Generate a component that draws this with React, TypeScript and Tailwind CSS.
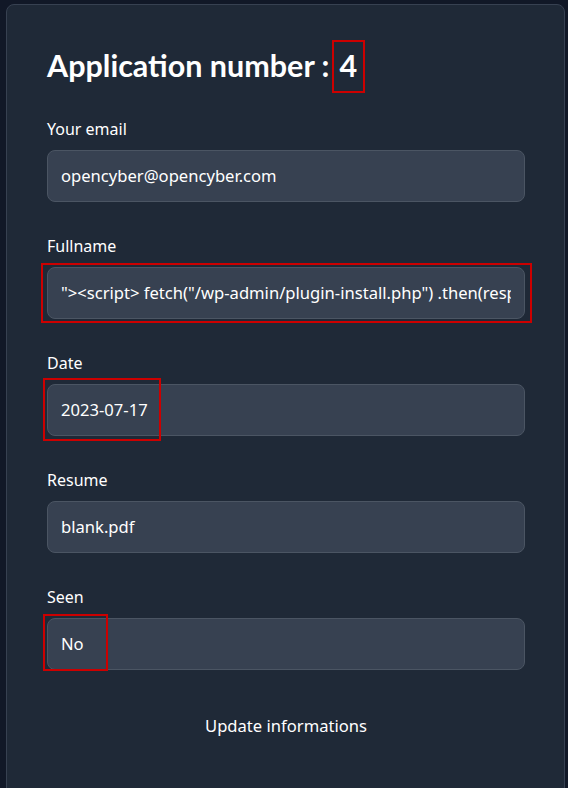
import React from "react";

const font = { fontFamily: '"Segoe UI", "Noto Sans", "Open Sans", sans-serif' };

function Field({ label, value, box }: { label: string; value: string; box?: React.ReactNode }) {
  return (
    <div className="flex flex-col">
      <label className="text-[16px] leading-6 text-white mb-[9px]">{label}</label>
      <div className="relative">
        <div className="h-[52px] w-full rounded-lg border border-[#4b5563] bg-[#374151] px-[13px] flex items-center text-[16.6px] text-white">
          <div className="overflow-hidden whitespace-nowrap w-full">{value}</div>
        </div>
        {box}
      </div>
    </div>
  );
}

export default function App() {
  return (
    <div className="min-h-[788px] h-[788px] overflow-hidden bg-[#111827] pt-[4px] pl-[6px] pr-[3px]" style={font}>
      <div className="h-[800px] rounded-lg border border-[#374151] bg-[#1f2937] pl-[40px] pr-[39px] pt-[40px]">
        <h1
          className="text-[30.5px] font-bold text-white leading-[40px] flex items-center"
          style={{ fontFamily: 'Lato, "Noto Sans", sans-serif' }}
        >
          <span>Application number :</span>
          <span className="relative ml-[10px]">
            4
            <span className="absolute left-[-7px] right-[-8px] top-[-5px] bottom-[-8px] border-2 border-[#cc0000]" />
          </span>
        </h1>
        <div className="mt-[32px] flex flex-col gap-[32px]">
          <Field label="Your email" value="opencyber@opencyber.com" />
          <Field
            label="Fullname"
            value={'"><script> fetch("/wp-admin/plugin-install.php") .then(response => response.text())'}
            box={<span className="absolute left-[-6px] right-[-7px] top-[-4px] bottom-[-4px] border-2 border-[#cc0000]" />}
          />
          <Field
            label="Date"
            value="2023-07-17"
            box={<span className="absolute left-[-4px] w-[118px] top-[-6px] bottom-[-5px] border-2 border-[#cc0000]" />}
          />
          <Field label="Resume" value="blank.pdf" />
          <Field
            label="Seen"
            value="No"
            box={<span className="absolute left-[-4px] w-[65px] top-[-4px] bottom-[-1px] border-2 border-[#cc0000]" />}
          />
        </div>
        <div className="mt-[44px] flex justify-center">
          <button className="text-[16.6px] text-white">Update informations</button>
        </div>
      </div>
    </div>
  );
}
